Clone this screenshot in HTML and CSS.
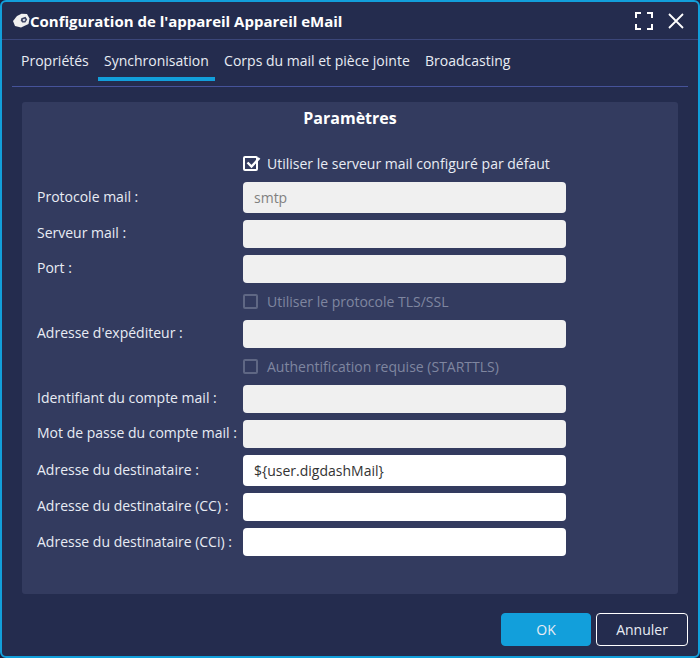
FILE: index.html
```html
<!DOCTYPE html>
<html lang="fr">
<head>
<meta charset="utf-8">
<title>Configuration de l'appareil</title>
<link rel="stylesheet" href="styles.css">
</head>
<body>
<div class="dialog">
  <header class="titlebar">
    <svg class="logo" viewBox="0 0 18 18" width="18" height="18"><path fill="#f0f0f0" d="M1 9 5 4 9.500 1.800 15 2 17.500 6.500 16.500 12 9 15.500 3 14Z"/><path fill="#3a4160" d="M9.300 6.200 13.500 4.800 15.200 7.600 13.300 10.600 10.200 10.600 8.800 8.600Z"/><path fill="#d5d9e6" d="M10.800 7.200 12.900 6.700 13.500 8 12.300 9.300 10.900 9.100Z"/></svg>
    <h1 class="title">Configuration de l'appareil Appareil eMail</h1>
    <svg class="tool expand" viewBox="0 0 18 18" width="18" height="18"><path fill="none" stroke="#fff" stroke-width="2" d="M1 6V1H6M12 1H17V6M17 12V17H12M6 17H1V12"/></svg>
    <svg class="tool close" viewBox="0 0 16 16" width="16" height="16"><path fill="none" stroke="#fff" stroke-width="1.8" d="M1 1 15 15M15 1 1 15"/></svg>
  </header>
  <nav class="tabs">
    <span class="tab">Propriétés</span>
    <span class="tab active">Synchronisation</span>
    <span class="tab">Corps du mail et pièce jointe</span>
    <span class="tab">Broadcasting</span>
  </nav>
  <section class="panel">
    <h2 class="panel-title">Paramètres</h2>
    <div class="form">
      <div class="row check-row">
        <span class="box checked"><svg viewBox="0 0 18 18" width="18" height="18"><path fill="none" stroke="#fff" stroke-width="2.4" d="M3.5 7.500 7.500 11.500 15.500 3"/></svg></span>
        <span class="check-label">Utiliser le serveur mail configuré par défaut</span>
      </div>
      <div class="row tall-row"><label class="label">Protocole mail :</label><div class="input disabled">smtp</div></div>
      <div class="row"><label class="label">Serveur mail :</label><div class="input disabled"></div></div>
      <div class="row"><label class="label">Port :</label><div class="input disabled"></div></div>
      <div class="row check-row off">
        <span class="box"></span>
        <span class="check-label">Utiliser le protocole TLS/SSL</span>
      </div>
      <div class="row"><label class="label">Adresse d'expéditeur :</label><div class="input disabled"></div></div>
      <div class="row check-row off">
        <span class="box"></span>
        <span class="check-label">Authentification requise (STARTTLS)</span>
      </div>
      <div class="row"><label class="label">Identifiant du compte mail :</label><div class="input disabled"></div></div>
      <div class="row"><label class="label">Mot de passe du compte mail :</label><div class="input disabled"></div></div>
      <div class="row tall-row"><label class="label">Adresse du destinataire :</label><div class="input">${user.digdashMail}</div></div>
      <div class="row"><label class="label">Adresse du destinataire (CC) :</label><div class="input"></div></div>
      <div class="row"><label class="label">Adresse du destinataire (CCi) :</label><div class="input"></div></div>
    </div>
  </section>
  <footer class="actions">
    <button class="btn primary">OK</button>
    <button class="btn">Annuler</button>
  </footer>
</div>
</body>
</html>
```
FILE: styles.css
```css
* { box-sizing: border-box; }
html, body { margin: 0; height: 100%; background: #1b2140; }
body { font-family: "Open Sans", "Noto Sans", sans-serif; font-size: 14px; color: #e8ecf4; }
.dialog {
  width: 700px; height: 658px;
  background: #242c4e;
  border: 2px solid #129fdb;
  border-radius: 6px;
  display: flex; flex-direction: column;
}
.titlebar {
  height: 38px; flex: none;
  display: flex; align-items: center;
  padding: 0 14px 0 10px;
  border-bottom: 1px solid #3b4679;
}
.logo { flex: none; }
.title { flex: 1; margin: 0; font-size: 15px; font-weight: 700; color: #fff; }
.tool { flex: none; }
.expand { margin-right: 15px; }
.tabs {
  height: 47px; flex: none;
  margin: 0 10px;
  padding: 0 0 0 3px;
  display: flex; align-items: flex-start;
  border-bottom: 1px solid #46539a;
}
.tab { height: 41px; padding: 11px 6px 0; line-height: 20px; margin-right: 3.25px; color: #e8ecf4; }
.tab.active { border-bottom: 4px solid #129fdb; }
.panel {
  margin: 15px 20px 0;
  height: 492px; flex: none;
  background: #333b5f;
  border-radius: 3px;
  padding: 0 15px;
}
.panel-title { margin: 0; height: 50px; padding-top: 5px; line-height: 22px; font-size: 16px; font-weight: 700; text-align: center; color: #fff; }
.form { display: flex; flex-direction: column; gap: 7px; }
.row { display: flex; align-items: flex-start; }
.label { width: 206px; flex: none; color: #e8ecf4; line-height: 19px; padding-top: 3px; }
.tall-row .label { padding-top: 5px; }
.row:last-child .label { padding-top: 4px; }
.input {
  width: 323px; height: 28px;
  background: #fff;
  border-radius: 4px;
  padding: 0 11px;
  line-height: 31px;
  color: #333;
}
.tall-row .input { height: 31px; }
.input.disabled { background: #f0f0f0; color: #808080; }
.check-row { height: 23px; padding-left: 206px; align-items: center; }
.box {
  width: 15px; height: 15px; flex: none;
  border: 2px solid #fff;
  border-radius: 2px;
  margin-right: 9px;
  position: relative;
}
.box svg { position: absolute; left: -1px; top: -3px; }
.off .box { border-color: #5f6784; }
.off .check-label { color: #7f86a0; }
.check-label { color: #e8ecf4; }
.actions {
  flex: 1;
  display: flex; justify-content: flex-end; align-items: flex-start; gap: 5px;
  padding: 19px 10px 0 0;
}
.btn {
  width: 92px; height: 33px;
  background: transparent;
  border: 1px solid #fff;
  border-radius: 4px;
  font: inherit; color: #e8ecf4;
  padding: 0;
  line-height: 20px;
}
.btn.primary { width: 90px; background: #129fdb; border-color: #129fdb; }
```
